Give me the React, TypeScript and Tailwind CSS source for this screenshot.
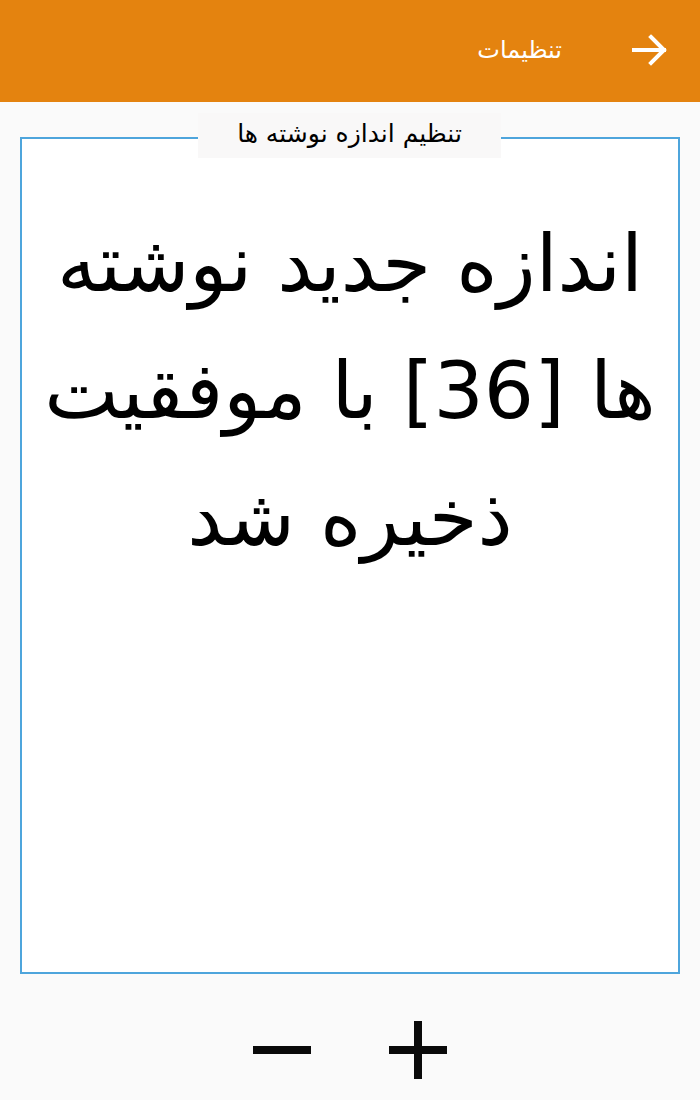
import React from 'react';

const font = { fontFamily: '"DejaVu Sans", "Noto Sans", sans-serif' };

const BackArrow = () => (
  <svg width="36" height="34" viewBox="0 0 36 34" fill="none" stroke="white" strokeWidth="4" strokeLinecap="square">
    <line x1="2" y1="17" x2="32" y2="17" />
    <polyline points="19,4 32,17 19,30" strokeLinejoin="miter" />
  </svg>
);

const App = () => {
  return (
    <div dir="rtl" className="w-[700px] h-[1100px] bg-[#fafafa] flex flex-col overflow-hidden" style={font}>
      <header className="h-[102px] bg-[#e4830f] flex items-center pr-[32px] pb-[3px] gap-[70px] shrink-0">
        <BackArrow />
        <span className="text-white text-[24px]">تنظیمات</span>
      </header>

      <div className="relative mx-[20px] mt-[35px] h-[837px] border-2 border-[#4ea5dc] bg-white">
        <div className="absolute -top-[26px] left-[176px] w-[303px] h-[45px] pb-[3px] bg-[#f9f8f8] flex items-center justify-center text-[25px] text-black">
          تنظیم اندازه نوشته ها
        </div>
        <p className="mt-[62px] px-[16px] text-center text-[79px] leading-[127px] text-black">
          اندازه جدید نوشته ها [36] با موفقیت ذخیره شد
        </p>
      </div>

      <div dir="ltr" className="flex justify-center items-center gap-[78px] mt-[47px]">
        <button className="w-[58px] h-[58px] flex items-center justify-center">
          <span className="block w-[58px] h-[8px] bg-[#0a0a0a]" />
        </button>
        <button className="relative w-[58px] h-[58px] flex items-center justify-center">
          <span className="block w-[58px] h-[8px] bg-[#0a0a0a]" />
          <span className="absolute left-[25px] top-0 w-[8px] h-[58px] bg-[#0a0a0a]" />
        </button>
      </div>
    </div>
  );
};

export default App;
